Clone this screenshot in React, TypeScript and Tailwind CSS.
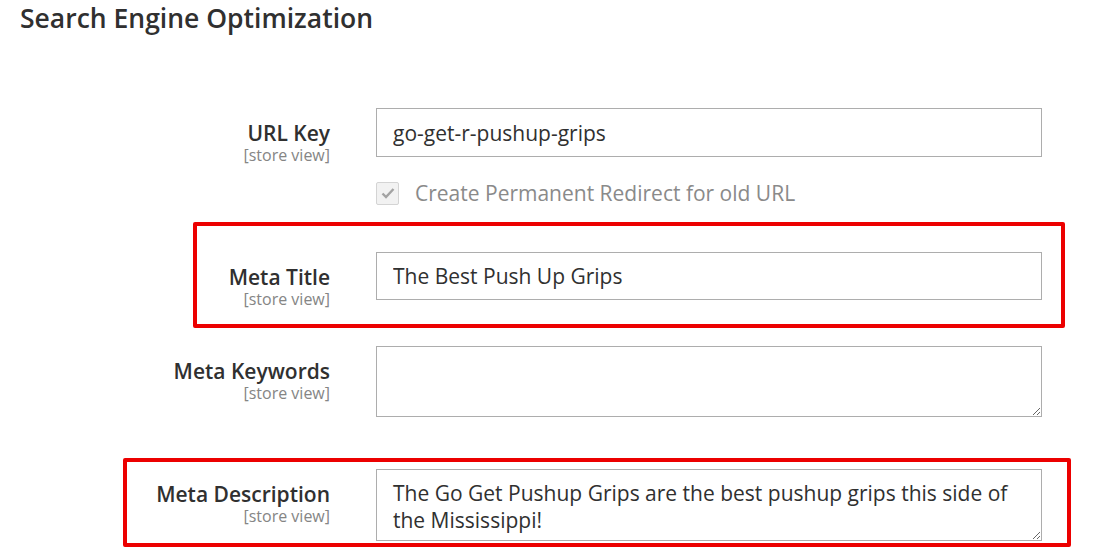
import type { ReactNode } from "react";

function Label({ title, width }: { title: string; width: number }) {
    return (
        <div className="shrink-0 pt-[12px] text-right" style={{ width }}>
            <div className="text-[21px] font-semibold leading-[26px] text-[#303030]">{title}</div>
            <div className="text-[16px] leading-[19px] text-[#858585]">[store view]</div>
        </div>
    );
}

function Field({ title, labelWidth, children }: { title: string; labelWidth: number; children: ReactNode }) {
    return (
        <div className="flex items-start gap-[46px]">
            <Label title={title} width={labelWidth} />
            <div className="w-[666px] shrink-0">{children}</div>
        </div>
    );
}

const inputCls =
    "block w-full border border-[#adadad] bg-white px-4 text-[21px] text-[#303030] outline-none";

export default function App() {
    return (
        <div className="h-[552px] w-[1097px] overflow-hidden bg-white font-['Open_Sans',sans-serif]">
            {/* Header */}
            <h1 className="h-[36px] pl-[20px] text-[26.5px] font-semibold leading-[36px] text-[#303030]">
                Search Engine Optimization
            </h1>

            {/* URL Key */}
            <div className="mt-[72px] h-[49px]">
                <Field title="URL Key" labelWidth={330}>
                    <input className={`${inputCls} h-[49px]`} defaultValue="go-get-r-pushup-grips" />
                </Field>
            </div>

            {/* Redirect checkbox */}
            <div className="mt-[24px] ml-[376px] flex h-[24px] items-center gap-[16px]">
                <div className="flex h-[23px] w-[23px] items-center justify-center rounded-[2px] border border-[#d4d4d4] bg-[#f2f2f2]">
                    <svg width="14" height="12" viewBox="0 0 14 12" fill="none">
                        <path d="M1.5 6.5 L5 10 L12.5 2" stroke="#a3a3a3" strokeWidth="2.4" />
                    </svg>
                </div>
                <span className="text-[21px] leading-[28px] text-[#8a8a8a]">
                    Create Permanent Redirect for old URL
                </span>
            </div>

            {/* Meta Title (highlighted) */}
            <div className="mt-[17px] ml-[193px] w-[872px] rounded-[2px] border-4 border-[#ec0000] pt-[26px] pb-[24px]">
                <div className="h-[48px]">
                    <Field title="Meta Title" labelWidth={133}>
                        <input className={`${inputCls} h-[48px]`} defaultValue="The Best Push Up Grips" />
                    </Field>
                </div>
            </div>

            {/* Meta Keywords */}
            <div className="mt-[18px] h-[71px]">
                <Field title="Meta Keywords" labelWidth={330}>
                    <textarea className={`${inputCls} h-[71px] pt-[9px] leading-[27px]`} defaultValue="" />
                </Field>
            </div>

            {/* Meta Description (highlighted) */}
            <div className="mt-[41px] ml-[123px] w-[948px] rounded-[2px] border-4 border-[#ec0000] pt-[7px] pb-[2px]">
                <div className="h-[72px]">
                    <Field title="Meta Description" labelWidth={203}>
                        <textarea
                            className={`${inputCls} h-[72px] pt-[10px] leading-[27px]`}
                            defaultValue="The Go Get Pushup Grips are the best pushup grips this side of the Mississippi!"
                        />
                    </Field>
                </div>
            </div>
        </div>
    );
}
